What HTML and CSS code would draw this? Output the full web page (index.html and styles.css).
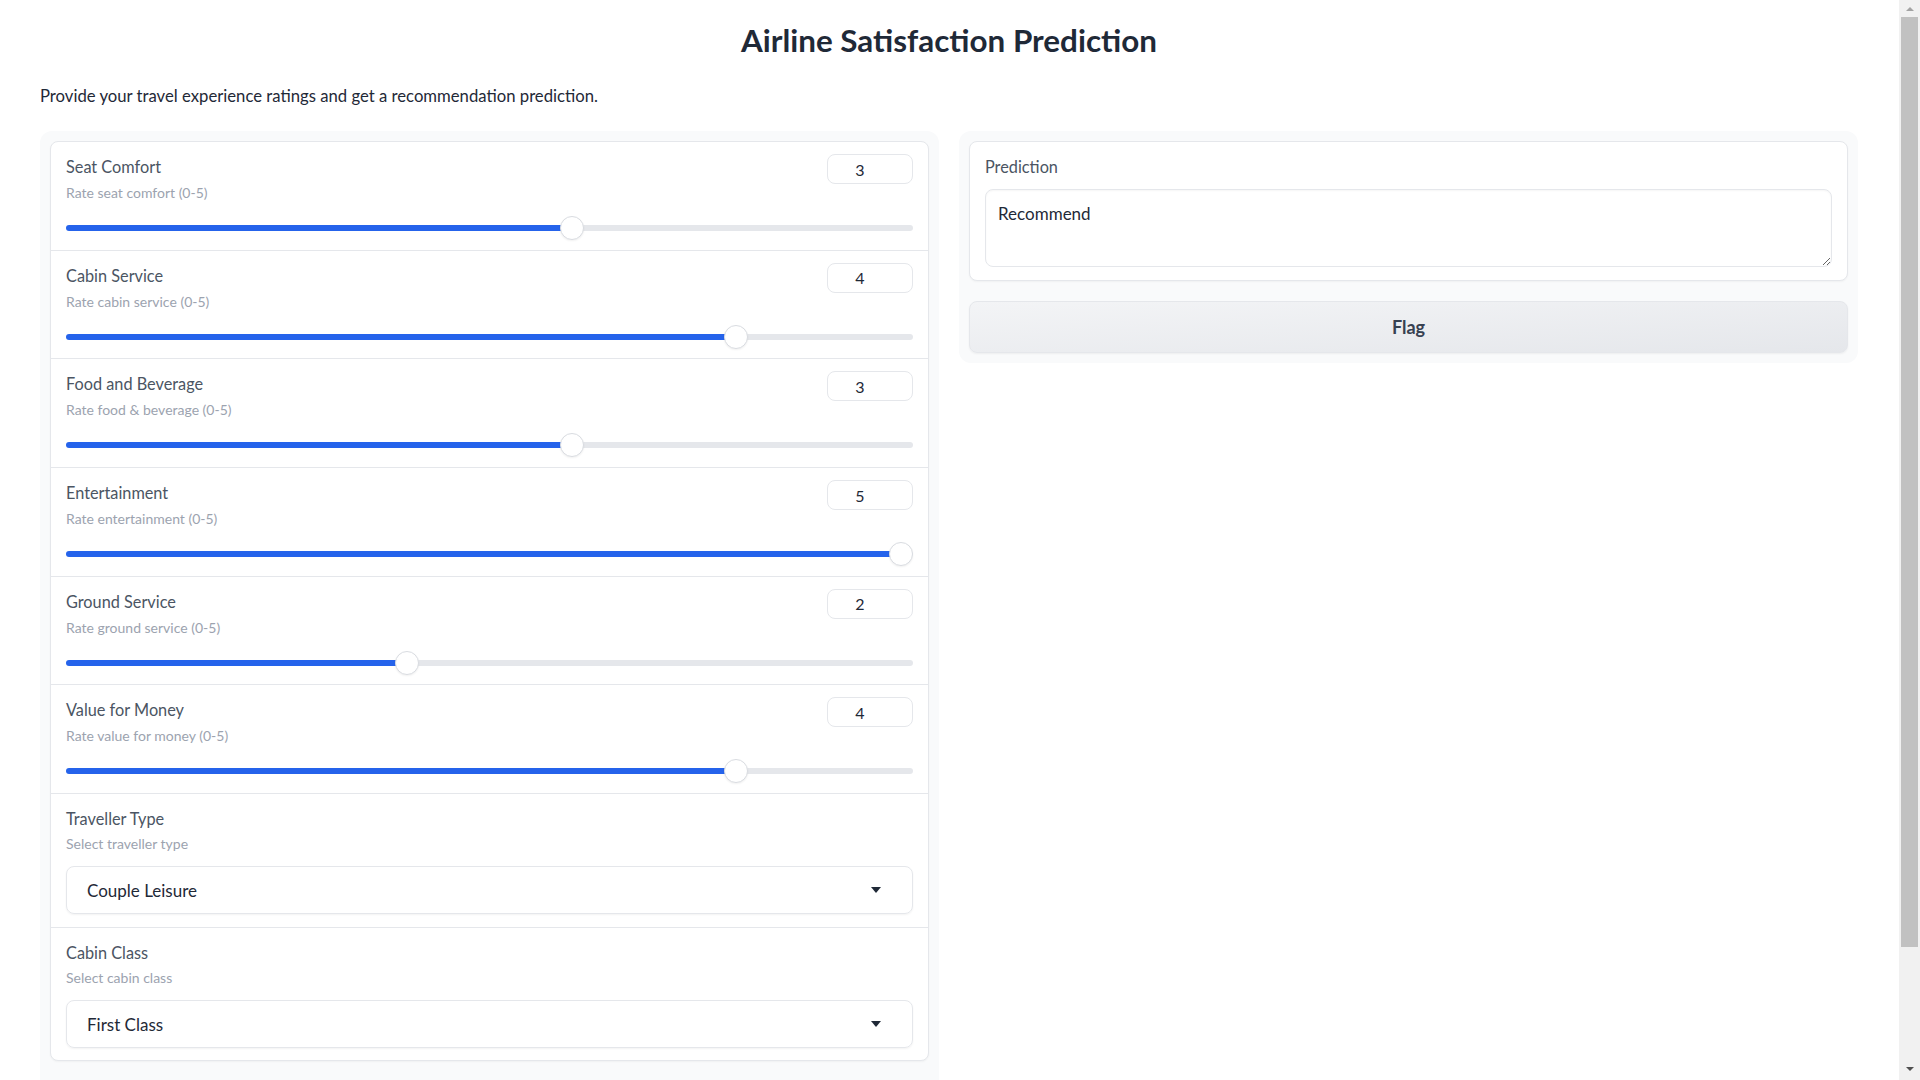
FILE: index.html
```html
<!DOCTYPE html>
<html lang="en">
<head>
<meta charset="utf-8">
<title>Airline Satisfaction Prediction</title>
<link rel="stylesheet" href="styles.css">
</head>
<body>
<div class="app">
  <h1 class="title">Airline Satisfaction Prediction</h1>
  <p class="desc">Provide your travel experience ratings and get a recommendation prediction.</p>
  <div class="row">
    <div class="panel inputs">
      <div class="block">
        <div class="field">
          <div class="head">
            <div class="labels"><span class="label">Seat Comfort</span><span class="info">Rate seat comfort (0-5)</span></div>
            <input class="num" type="number" value="3" min="0" max="5">
          </div>
          <input class="range" type="range" min="0" max="5" step="1" value="3" style="--f:0.6">
        </div>
        <div class="field">
          <div class="head">
            <div class="labels"><span class="label">Cabin Service</span><span class="info">Rate cabin service (0-5)</span></div>
            <input class="num" type="number" value="4" min="0" max="5">
          </div>
          <input class="range" type="range" min="0" max="5" step="1" value="4" style="--f:0.8">
        </div>
        <div class="field">
          <div class="head">
            <div class="labels"><span class="label">Food and Beverage</span><span class="info">Rate food &amp; beverage (0-5)</span></div>
            <input class="num" type="number" value="3" min="0" max="5">
          </div>
          <input class="range" type="range" min="0" max="5" step="1" value="3" style="--f:0.6">
        </div>
        <div class="field">
          <div class="head">
            <div class="labels"><span class="label">Entertainment</span><span class="info">Rate entertainment (0-5)</span></div>
            <input class="num" type="number" value="5" min="0" max="5">
          </div>
          <input class="range" type="range" min="0" max="5" step="1" value="5" style="--f:1">
        </div>
        <div class="field">
          <div class="head">
            <div class="labels"><span class="label">Ground Service</span><span class="info">Rate ground service (0-5)</span></div>
            <input class="num" type="number" value="2" min="0" max="5">
          </div>
          <input class="range" type="range" min="0" max="5" step="1" value="2" style="--f:0.4">
        </div>
        <div class="field">
          <div class="head">
            <div class="labels"><span class="label">Value for Money</span><span class="info">Rate value for money (0-5)</span></div>
            <input class="num" type="number" value="4" min="0" max="5">
          </div>
          <input class="range" type="range" min="0" max="5" step="1" value="4" style="--f:0.8">
        </div>
        <div class="field dd">
          <div class="labels"><span class="label">Traveller Type</span><span class="info">Select traveller type</span></div>
          <div class="select"><span>Couple Leisure</span><span class="caret"></span></div>
        </div>
        <div class="field dd last">
          <div class="labels"><span class="label">Cabin Class</span><span class="info">Select cabin class</span></div>
          <div class="select"><span>First Class</span><span class="caret"></span></div>
        </div>
      </div>
    </div>
    <div class="panel">
      <div class="block out">
        <span class="label">Prediction</span>
        <textarea class="result" rows="3">Recommend</textarea>
      </div>
      <button class="btn">Flag</button>
    </div>
  </div>
</div>
<div class="scrollbar">
  <span class="arrow up"></span>
  <div class="thumb-area"><div class="thumb"></div></div>
  <span class="arrow down"></span>
</div>
</body>
</html>
```

FILE: styles.css
```css
html, body {
  margin: 0;
  background: #ffffff;
}
body {
  display: flex;
  height: 100vh;
  overflow: hidden;
  font-family: Lato, "Noto Sans", sans-serif;
  color: #1f2937;
}
.app {
  flex: 1;
  min-width: 0;
  height: 100vh;
  overflow: hidden;
  padding: 0 41px 0 40px;
}
.title {
  margin: 0;
  padding-top: 18px;
  text-align: center;
  font-size: 31.4px;
  font-weight: 700;
  line-height: 44px;
  color: #1f2937;
}
.desc {
  margin: 23px 0 0;
  font-size: 16.7px;
  line-height: 22px;
  color: #1f2937;
}
.row {
  display: flex;
  gap: 20px;
  margin-top: 24px;
  align-items: flex-start;
}
.panel {
  flex: 1;
  min-width: 0;
  background: #f9fafb;
  border-radius: 12px;
  padding: 10px;
  display: flex;
  flex-direction: column;
  gap: 20px;
}
.panel.inputs {
  padding-bottom: 90px;
}
.block {
  background: #ffffff;
  border: 1px solid #e5e7eb;
  border-radius: 8px;
  box-shadow: 0 1px 2px rgba(0, 0, 0, 0.04);
}
.field {
  padding: 12px 15px 9.7px;
  border-bottom: 1px solid #e5e7eb;
}
.field.last {
  border-bottom: 0;
}
.head {
  display: flex;
  justify-content: space-between;
  align-items: flex-start;
}
.labels {
  display: flex;
  flex-direction: column;
}
.label {
  display: block;
  margin-top: 3px;
  font-size: 16.3px;
  line-height: 20px;
  color: #4b5563;
}
.info {
  display: block;
  margin-top: 6px;
  font-size: 14px;
  line-height: 20px;
  color: #9ca3af;
}
.num {
  box-sizing: border-box;
  width: 86px;
  height: 30px;
  margin: 0;
  border: 1px solid #e5e7eb;
  border-radius: 8px;
  background: #fff;
  padding: 0 20px 0 0;
  text-align: center;
  font-family: inherit;
  font-size: 16px;
  color: #1f2937;
  outline: none;
}
.num::-webkit-inner-spin-button,
.num::-webkit-outer-spin-button {
  -webkit-appearance: none;
  margin: 0;
}
.range {
  -webkit-appearance: none;
  appearance: none;
  display: block;
  width: 100%;
  height: 24px;
  margin: 13px 0 0;
  background: transparent;
}
.range::-webkit-slider-runnable-track {
  height: 6px;
  border-radius: 3px;
  background: linear-gradient(to right, #2563eb 0, #2563eb calc(12px + (100% - 24px) * var(--f)), #e5e7eb calc(12px + (100% - 24px) * var(--f)), #e5e7eb 100%);
}
.range::-webkit-slider-thumb {
  -webkit-appearance: none;
  box-sizing: border-box;
  width: 24px;
  height: 24px;
  margin-top: -9px;
  border-radius: 50%;
  background: #ffffff;
  border: 1px solid #d9dce1;
  box-shadow: 0 1px 2px rgba(0, 0, 0, 0.06);
}
.field.dd {
  padding: 12px 15px 13px;
}
.field.dd .label {
  margin-top: 3px;
}
.field.dd .info {
  margin-top: 5px;
}
.field.dd.last {
  padding-bottom: 12px;
}
.select {
  box-sizing: border-box;
  height: 48px;
  margin-top: 12px;
  border: 1px solid #e5e7eb;
  border-radius: 8px;
  box-shadow: 0 1px 2px rgba(0, 0, 0, 0.05);
  display: flex;
  align-items: center;
  justify-content: space-between;
  padding: 0 31px 0 20px;
  font-size: 17px;
  color: #1f2937;
}
.caret {
  width: 0;
  height: 0;
  border-left: 5px solid transparent;
  border-right: 5px solid transparent;
  border-top: 6px solid #1f2937;
}
.block.out {
  padding: 15px 15px 13px;
}
.block.out .label {
  margin-top: 0;
}
.result {
  display: block;
  box-sizing: border-box;
  width: 100%;
  height: 78px;
  margin-top: 12px;
  padding: 12px;
  border: 1px solid #e5e7eb;
  border-radius: 8px;
  box-shadow: inset 0 1px 2px rgba(0, 0, 0, 0.04);
  font-family: inherit;
  font-size: 17px;
  line-height: 24px;
  color: #1f2937;
  resize: vertical;
  outline: none;
}
.btn {
  flex: none;
  height: 52px;
  border: 1px solid #e5e7eb;
  border-radius: 8px;
  background: linear-gradient(to bottom right, #f3f4f6, #e5e7eb);
  box-shadow: 0 1px 2px rgba(0, 0, 0, 0.05);
  font-family: inherit;
  font-size: 18px;
  font-weight: 700;
  color: #374151;
  cursor: pointer;
}
.scrollbar {
  flex: none;
  width: 21px;
  height: 100vh;
  background: #f1f1f1;
  display: flex;
  flex-direction: column;
  align-items: center;
}
.arrow {
  flex: none;
  width: 0;
  height: 0;
  border-left: 4px solid transparent;
  border-right: 4px solid transparent;
}
.arrow.up {
  margin-top: 7px;
  border-bottom: 4px solid #a3a3a3;
}
.thumb-area {
  flex: 1;
  width: 100%;
  padding: 6px 2px 0;
  box-sizing: border-box;
}
.thumb {
  height: 930px;
  background: #c1c1c1;
}
.arrow.down {
  margin-bottom: 9px;
  border-top: 4px solid #505050;
}
```
